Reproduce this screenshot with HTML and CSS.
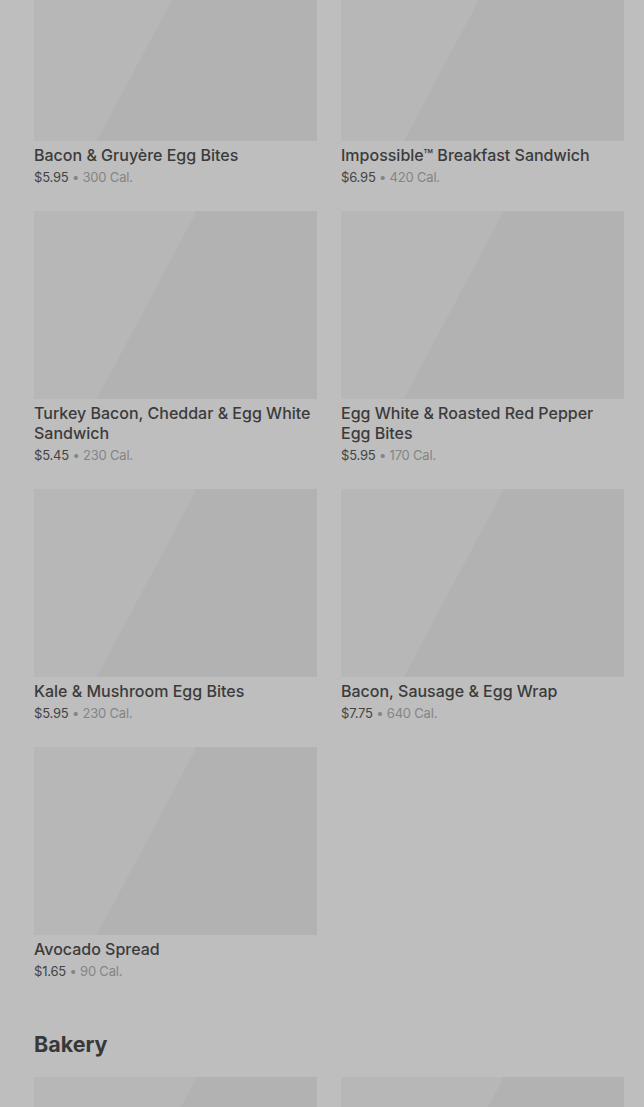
FILE: index.html
```
<!DOCTYPE html>
<html lang="en">

<head>
    <meta charset="UTF-8">
    <meta name="viewport" content="width=device-width, initial-scale=1.0">
    <title>Menu</title>
    <link rel="stylesheet" href="styles.css">
</head>

<body>

    <div class="menu">
        <div class="grid">
            <div class="item">
                <div class="photo"></div>
                <div class="name">Bacon &amp; Gruyère Egg Bites</div>
                <div class="meta"><span class="price">$5.95</span> • 300 Cal.</div>
            </div>
            <div class="item">
                <div class="photo"></div>
                <div class="name">Impossible™ Breakfast Sandwich</div>
                <div class="meta"><span class="price">$6.95</span> • 420 Cal.</div>
            </div>
            <div class="item">
                <div class="photo"></div>
                <div class="name">Turkey Bacon, Cheddar &amp; Egg White Sandwich</div>
                <div class="meta"><span class="price">$5.45</span> • 230 Cal.</div>
            </div>
            <div class="item">
                <div class="photo"></div>
                <div class="name">Egg White &amp; Roasted Red Pepper Egg Bites</div>
                <div class="meta"><span class="price">$5.95</span> • 170 Cal.</div>
            </div>
            <div class="item">
                <div class="photo"></div>
                <div class="name">Kale &amp; Mushroom Egg Bites</div>
                <div class="meta"><span class="price">$5.95</span> • 230 Cal.</div>
            </div>
            <div class="item">
                <div class="photo"></div>
                <div class="name">Bacon, Sausage &amp; Egg Wrap</div>
                <div class="meta"><span class="price">$7.75</span> • 640 Cal.</div>
            </div>
            <div class="item">
                <div class="photo"></div>
                <div class="name">Avocado Spread</div>
                <div class="meta"><span class="price">$1.65</span> • 90 Cal.</div>
            </div>
        </div>

        <h2>Bakery</h2>

        <div class="grid">
            <div class="item">
                <div class="photo"></div>
            </div>
            <div class="item">
                <div class="photo"></div>
            </div>
        </div>
    </div>

</body>

</html>
```

FILE: styles.css
```
body {
    margin: 0;
    background-color: #bebebe;
    font-family: Inter, "Noto Sans", sans-serif;
    color: #3b3b3b;
    overflow: hidden;
}

.menu {
    margin-top: -47px;
    padding: 0 20px 0 34px;
}

.grid {
    display: grid;
    grid-template-columns: repeat(2, 283px);
    column-gap: 24px;
    row-gap: 24px;
}

.photo {
    height: 188px;
    background: linear-gradient(118deg, #b7b7b7 42.5%, #b2b2b2 42.5%);
}

.name {
    margin-top: 4px;
    font-size: 16px;
    line-height: 20px;
    font-weight: 500;
    color: #3b3b3b;
}

.meta {
    margin-top: 2px;
    font-size: 13px;
    line-height: 20px;
    letter-spacing: -0.2px;
    color: #858585;
}

.price {
    color: #444444;
}

h2 {
    margin: 49px 0 19px;
    font-size: 21.5px;
    line-height: 28px;
    font-weight: 700;
    color: #383838;
}
```
